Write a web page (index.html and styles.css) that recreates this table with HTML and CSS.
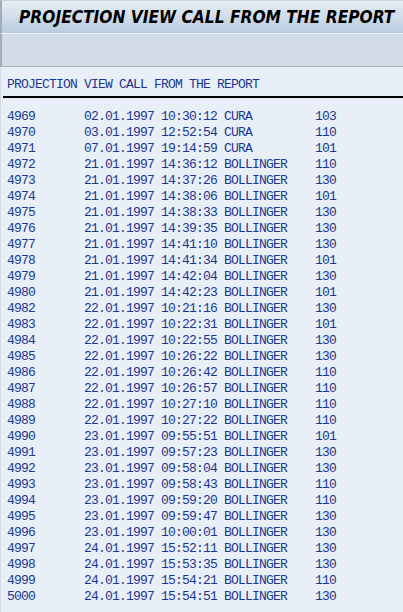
FILE: index.html
```html
<!DOCTYPE html>
<html>
<head>
<meta charset="utf-8">
<link rel="stylesheet" href="styles.css">
</head>
<body>
<div class="window">
  <div class="titlebar"><h1 class="title">PROJECTION VIEW CALL FROM THE REPORT</h1></div>
  <div class="toolbar"></div>
  <div class="content">
    <div class="list-header">PROJECTION VIEW CALL FROM THE REPORT</div>
    <div class="rule"></div>
<pre class="list">4969       02.01.1997 10:30:12 CURA         103
4970       03.01.1997 12:52:54 CURA         110
4971       07.01.1997 19:14:59 CURA         101
4972       21.01.1997 14:36:12 BOLLINGER    110
4973       21.01.1997 14:37:26 BOLLINGER    130
4974       21.01.1997 14:38:06 BOLLINGER    101
4975       21.01.1997 14:38:33 BOLLINGER    130
4976       21.01.1997 14:39:35 BOLLINGER    130
4977       21.01.1997 14:41:10 BOLLINGER    130
4978       21.01.1997 14:41:34 BOLLINGER    101
4979       21.01.1997 14:42:04 BOLLINGER    130
4980       21.01.1997 14:42:23 BOLLINGER    101
4982       22.01.1997 10:21:16 BOLLINGER    130
4983       22.01.1997 10:22:31 BOLLINGER    101
4984       22.01.1997 10:22:55 BOLLINGER    130
4985       22.01.1997 10:26:22 BOLLINGER    130
4986       22.01.1997 10:26:42 BOLLINGER    110
4987       22.01.1997 10:26:57 BOLLINGER    110
4988       22.01.1997 10:27:10 BOLLINGER    110
4989       22.01.1997 10:27:22 BOLLINGER    110
4990       23.01.1997 09:55:51 BOLLINGER    101
4991       23.01.1997 09:57:23 BOLLINGER    130
4992       23.01.1997 09:58:04 BOLLINGER    130
4993       23.01.1997 09:58:43 BOLLINGER    110
4994       23.01.1997 09:59:20 BOLLINGER    110
4995       23.01.1997 09:59:47 BOLLINGER    130
4996       23.01.1997 10:00:01 BOLLINGER    130
4997       24.01.1997 15:52:11 BOLLINGER    130
4998       24.01.1997 15:53:35 BOLLINGER    130
4999       24.01.1997 15:54:21 BOLLINGER    110
5000       24.01.1997 15:54:51 BOLLINGER    130</pre>
  </div>
</div>
</body>
</html>
```
FILE: styles.css
```css
html, body {
  margin: 0;
  padding: 0;
  background: #e9eff7;
}
.window {
  width: 403px;
  height: 612px;
  display: flex;
  flex-direction: column;
  overflow: hidden;
}
.titlebar {
  height: 33px;
  box-sizing: border-box;
  border-left: 2px solid #a3adb9;
  border-top: 1px solid #c8d2dd;
  background: linear-gradient(to bottom, #e6edf4 0%, #d2deea 45%, #b9cbde 100%);
  display: flex;
  align-items: center;
  padding-left: 17px;
}
.title {
  margin: 0;
  font-family: "DejaVu Sans", Verdana, sans-serif;
  font-stretch: condensed;
  font-weight: bold;
  font-style: italic;
  font-size: 17.2px;
  color: #000;
  white-space: nowrap;
}
.toolbar {
  height: 34px;
  box-sizing: border-box;
  border-top: 1px solid #eef3f8;
  border-bottom: 1px solid #a9b4c1;
  border-left: 2px solid #a3adb9;
  background: #d1dce8;
}
.content {
  flex: 1;
  border-left: 1px solid #d3dbe4;
  padding-top: 10px;
  font-family: "Liberation Mono", "Courier New", monospace;
  font-size: 13px;
  letter-spacing: -0.8px;
  line-height: 16px;
  color: #1a3790;
}
.list-header {
  padding-left: 6px;
  white-space: pre;
}
.rule {
  height: 2px;
  background: #000;
  margin: 3px 0 11px 2px;
}
.list {
  margin: 0;
  padding-left: 6px;
  font: inherit;
  letter-spacing: inherit;
  color: inherit;
}
```
